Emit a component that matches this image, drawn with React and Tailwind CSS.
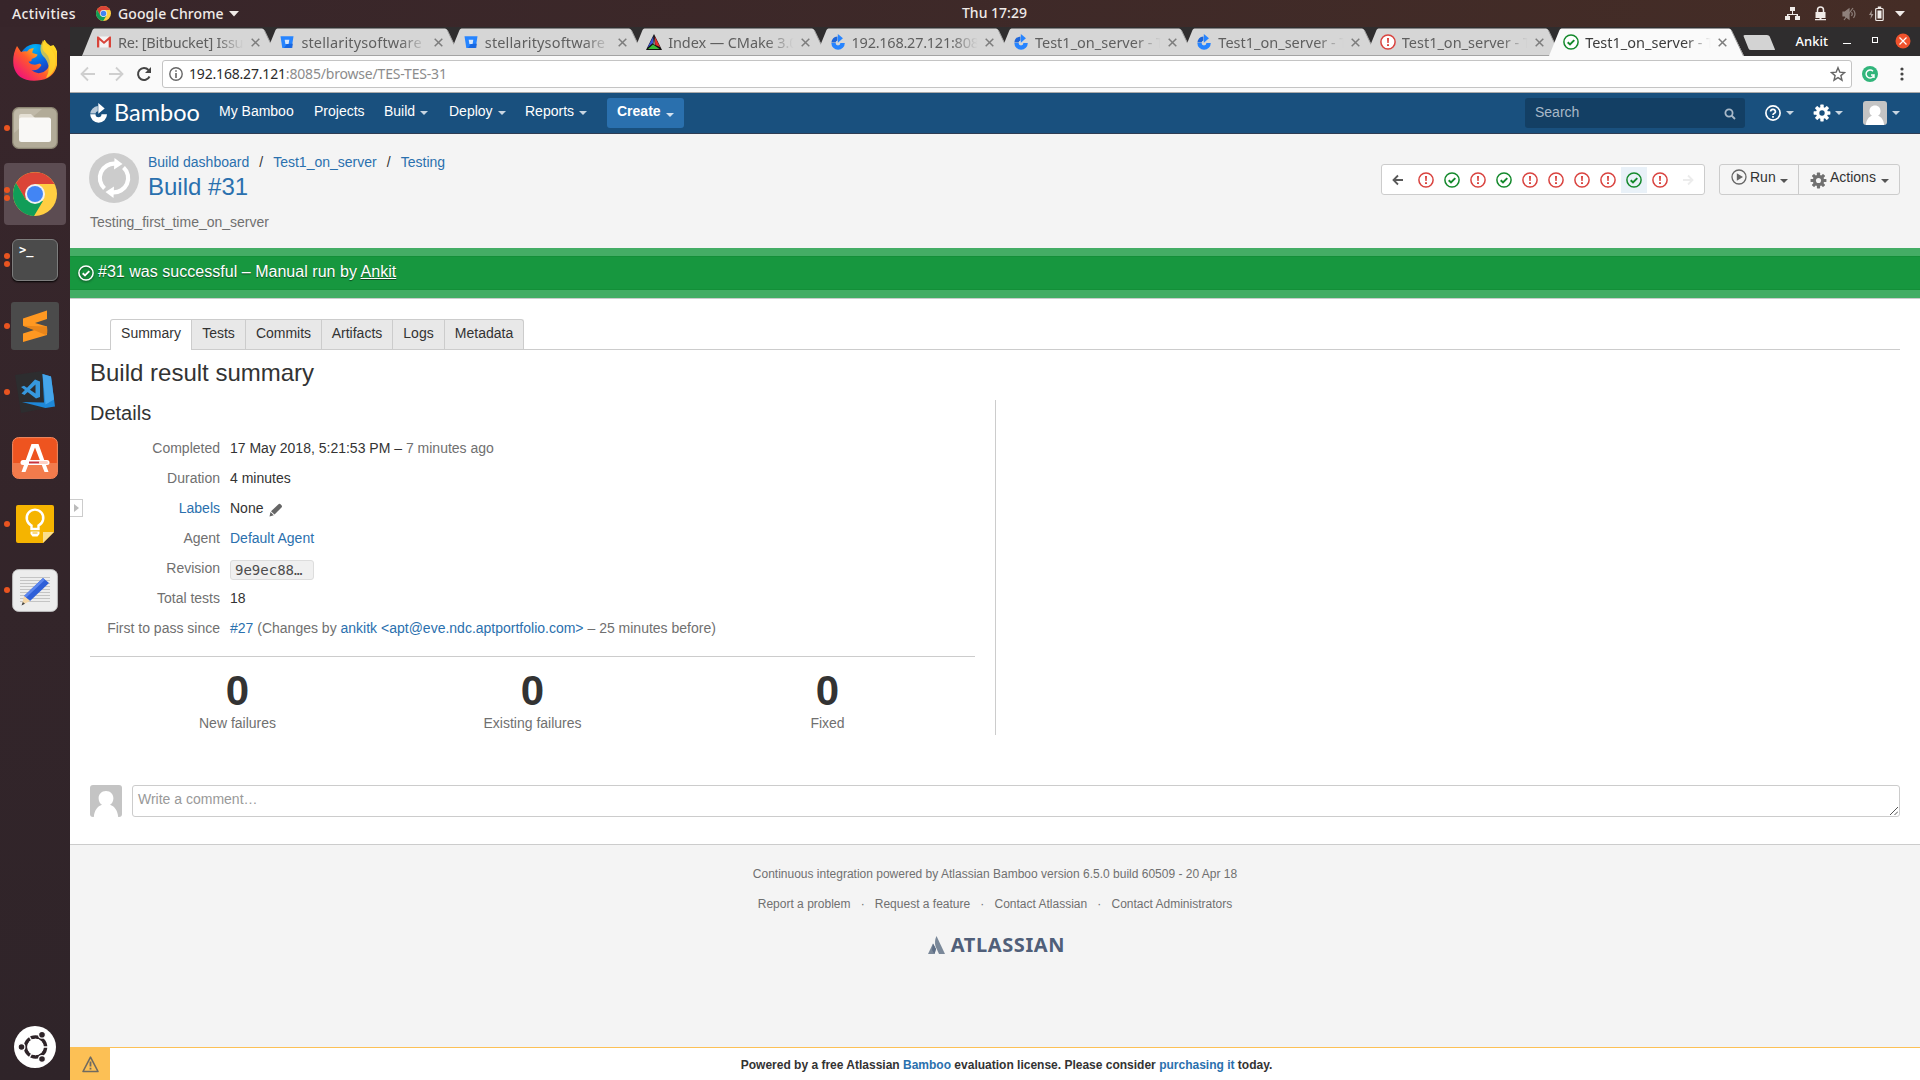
import React from "react";

const UI = "font-['Noto_Sans',sans-serif]";

function Caret({ className = "" }) {
  return (
    <svg width="8" height="4" viewBox="0 0 8 4" className={"shrink-0 " + className} fill="currentColor">
      <path d="M0 0h8L4 4z" />
    </svg>
  );
}

function FailIcon({ size = 16 }) {
  return (
    <svg width={size} height={size} viewBox="0 0 16 16" className="shrink-0">
      <circle cx="8" cy="8" r="7.1" fill="#fff" stroke="#d9433f" strokeWidth="1.5" />
      <path d="M7 4h2l-.3 5H7.3zM7 10.2h2v1.800H7z" fill="#d9433f" />
    </svg>
  );
}

function OkIcon({ size = 16, color = "#14892c", fill = "#fff", className = "" }) {
  return (
    <svg width={size} height={size} viewBox="0 0 16 16" className={"shrink-0 " + className}>
      <circle cx="8" cy="8" r="7.1" fill={fill} stroke={color} strokeWidth="1.5" />
      <path d="M4.700 8.200l2.300 2.200 4.300-4.300" fill="none" stroke={color} strokeWidth="2" />
    </svg>
  );
}

function Gear({ size = 18, className = "", hole = "#fff" }) {
  return (
    <svg width={size} height={size} viewBox="0 0 18 18" className={"shrink-0 " + className} fill="currentColor">
      {[0, 45, 90, 135].map((a) => (
        <rect key={a} x="7.300" y="0.600" width="3.400" height="16.800" rx="0.600" transform={"rotate(" + a + " 9 9)"} />
      ))}
      <circle cx="9" cy="9" r="6" />
      <circle cx="9" cy="9" r="2.700" fill={hole} />
    </svg>
  );
}

function Avatar({ size }) {
  return (
    <svg width={size} height={size} viewBox="0 0 32 32" className="shrink-0 rounded-[3px]">
      <rect width="32" height="32" fill="#c4c4c4" />
      <path d="M16 6c4.600 0 7.400 3.300 7.400 7.300 0 3-1.400 5.300-3.400 6.500 4.500 1.400 7.600 5.700 8.200 12.200H3.800c.6-6.500 3.700-10.800 8.200-12.200-2-1.200-3.400-3.500-3.400-6.500C8.600 9.300 11.400 6 16 6z" fill="#fff" />
    </svg>
  );
}

function BambooMark({ w, h, main, light }) {
  return (
    <svg width={w} height={h} viewBox="0 0 17 20" className="shrink-0">
      <path d="M.2 10.600A8.500 8.500 0 0 1 7.800 3v5.200a2.900 2.900 0 0 0-2.300 2.400z" fill={light} />
      <path d="M8.300 0l6.400 5.400-6.400 5.400z" fill={main} />
      <path d="M.2 11.300h5.300a3 3 0 0 0 6 0H17A8.500 8.500 0 0 1 8.600 19.800 8.500 8.500 0 0 1 .2 11.300z" fill={main} />
    </svg>
  );
}

function ChromeLogo({ size }) {
  return (
    <svg width={size} height={size} viewBox="0 0 44 44" className="shrink-0">
      <circle cx="22" cy="22" r="22" fill="#ffce42" />
      <path d="M22 22L3 11A22 22 0 0 1 41.500 12H22z" fill="#db4437" />
      <path d="M3 11l9.500 16.500L22 12z" fill="#db4437" />
      <path d="M3 11A22 22 0 0 0 21 44l9-15-17-1z" fill="#109d58" />
      <circle cx="22" cy="22" r="10" fill="#f1f1f1" />
      <circle cx="22" cy="22" r="8" fill="#4285f4" />
    </svg>
  );
}

function GmailIcon() {
  return (
    <svg width="16" height="16" viewBox="0 0 16 16">
      <rect x="1" y="2.500" width="14" height="11" fill="#f4f4f4" />
      <path d="M1 13.500v-11h1.500L8 7.500l5.500-5H15v11h-2.300V6L8 10 3.300 6v7.500z" fill="#d8443a" />
    </svg>
  );
}

function BitbucketIcon() {
  return (
    <svg width="16" height="16" viewBox="0 0 16 16">
      <path d="M1.500 2.200h13L12.700 14H3.300z" fill="#2684ff" />
      <path d="M8 9.700h6l-.7 4.300H5z" fill="#0f5bd6" opacity=".7" />
      <path d="M5.700 5.800h4.600L9.600 10H6.400z" fill="#d6e6fb" />
    </svg>
  );
}

function CmakeIcon() {
  return (
    <svg width="16" height="16" viewBox="0 0 16 16">
      <path d="M8 0L16 16H0z" fill="#111" />
      <path d="M7.400 2.300L7 9 1.500 13.500z" fill="#3a52d8" />
      <path d="M8.700 2.300L14.300 13.300 9.300 11z" fill="#e0302f" />
      <path d="M2 14.900l5-4.500 6.500 4.500z" fill="#3bbd3b" />
      <path d="M8 4l.8 7-1.300-1.300z" fill="#d5d5d5" />
    </svg>
  );
}

const bamboo = <BambooMark w={14} h={16} main="#2684ff" light="#1f66d8" />;
const browserTabs = [
  { t: "Re: [Bitbucket] Issu", i: <GmailIcon />, s: "tracking-[-0.25px]" },
  { t: "stellaritysoftware", i: <BitbucketIcon />, s: "tracking-[0.15px]" },
  { t: "stellaritysoftware", i: <BitbucketIcon />, s: "tracking-[0.15px]" },
  { t: "Index — CMake 3.0", i: <CmakeIcon />, s: "tracking-[-0.1px]" },
  { t: "192.168.27.121:808", i: bamboo, s: "tracking-[-0.25px]" },
  { t: "Test1_on_server - T", i: bamboo, s: "tracking-[0px]" },
  { t: "Test1_on_server - T", i: bamboo, s: "tracking-[0px]" },
  { t: "Test1_on_server - T", i: <FailIcon />, s: "tracking-[0px]" },
  { t: "Test1_on_server - T", i: <OkIcon />, s: "tracking-[0px]", active: true },
];

function BrowserTab({ tab }) {
  const fill = tab.active ? "#fafafa" : "#d6d6d6";
  return (
    <div className="relative -mr-[12px] flex h-7 w-[195.400px] shrink-0 items-center pl-[14px]">
      <svg className="absolute inset-0" width="196" height="28" viewBox="0 0 196 28">
        <path d="M0 28L10.500 2Q11.300 .5 12.500 .5H180Q181.500 .5 182.300 2L195 28z" fill={fill} />
        <path d="M182.300 2L194.500 28" stroke="#9b9b9b" fill="none" />
        {!tab.active && <path d="M0 27.500H196" stroke="#a3a3a3" />}
      </svg>
      <div className="relative flex w-4 justify-center">{tab.i}</div>
      <div className={"relative ml-[6px] w-[127px] overflow-hidden text-[14.500px] leading-7 whitespace-nowrap [mask-image:linear-gradient(to_right,#000_78%,transparent_99%)] " + tab.s + (tab.active ? " text-[#3c3c3c]" : " text-[#5f5f5f]")}>
        {tab.t}
      </div>
      <svg className="relative ml-[6px]" width="9" height="9" viewBox="0 0 9 9" stroke="#7d7d7d" strokeWidth="1.500">
        <path d="M.7.7l7.600 7.600M8.300.7L.7 8.300" />
      </svg>
    </div>
  );
}

function TopBar() {
  return (
    <div className={"flex h-[27px] shrink-0 items-center bg-linear-to-r from-[#37252a] to-[#452d26] text-[#f0ebe8] " + UI}>
      <div className="w-[96px] pl-3 text-[14px] font-medium tracking-[0.350px]">Activities</div>
      <ChromeLogo size={15} />
      <div className="ml-[7px] w-[107px] text-[14px] font-medium tracking-[0.080px] whitespace-nowrap">Google Chrome</div>
      <svg width="10" height="6" className="ml-[4px]" fill="#f0ebe8"><path d="M0 0h10L5 5.500z" /></svg>
      <div className="ml-[723px] w-[70px] text-[14px] font-medium whitespace-nowrap">
        <span className="relative -top-px">Thu 17:29</span>
      </div>
      <div className="ml-auto flex items-center pr-[15px]">
        <svg width="15" height="14" fill="#f0ebe8" className="mr-[15px]">
          <path d="M5 0h5v4H8v3h5v2h2v4h-5V9h1.500V8h-8v1H5v4H0V9h2V7h5V4H5z" />
        </svg>
        <svg width="11" height="15" className="mr-[16px]">
          <path d="M2.500 6V4a3 3 0 0 1 6 0v2" stroke="#f0ebe8" strokeWidth="1.500" fill="none" />
          <path d="M.5 6h10v6h-4v1H11v1.200H0V13h4.500v-1h-4z" fill="#f0ebe8" />
        </svg>
        <svg width="15" height="14" className="mr-[12px]" fill="none" stroke="#8f817c" strokeWidth="1.200">
          <path d="M1 5h2l4-3v10L3 9H1z" fill="#8f817c" />
          <path d="M2 13L11 1M9.500 5q1.500 2 0 4M11.500 3q3 4 0 8" />
        </svg>
        <svg width="15" height="16" className="mr-[11px]">
          <path d="M3 4L0 9h2l-.5 4L4.500 8h-2z" fill="#a3958f" />
          <rect x="6.700" y="2.500" width="7.500" height="12" rx="1" fill="none" stroke="#f0ebe8" strokeWidth="1.200" />
          <path d="M8.500 4.500h4v8h-4zM8.800.5h3.400V2H8.800z" fill="#f0ebe8" />
        </svg>
        <svg width="10" height="6" fill="#f0ebe8"><path d="M0 0h10L5 5.500z" /></svg>
      </div>
    </div>
  );
}

function Firefox() {
  return (
    <svg width="44" height="44" viewBox="0 0 44 44">
      <defs>
        <linearGradient id="ff1" x1="0.900" y1="0.100" x2="0.100" y2="0.900">
          <stop offset="0" stopColor="#ffe226" />
          <stop offset=".35" stopColor="#ffb01f" />
          <stop offset=".6" stopColor="#ff5a2b" />
          <stop offset="1" stopColor="#f0107c" />
        </linearGradient>
        <radialGradient id="ff2" cx=".45" cy=".1" r="1">
          <stop offset="0" stopColor="#00b3f4" />
          <stop offset=".5" stopColor="#0a5fe0" />
          <stop offset="1" stopColor="#3b1b8e" />
        </radialGradient>
      </defs>
      <circle cx="23" cy="21" r="17" fill="url(#ff2)" />
      <path d="M4 6l4 6q3-1 6-.5 3-4 7-3-2 2-1.500 4.500l5 1.500q0 2.500-6 4.500 1 3-3 2.500 1 2.500 5 3 3 .5 6-1 3 1 1 3-4 5-9 3.500 5 5 12 2 7-4 6-12-.5-4-4-7-6-4-1-14 1 4 6 7l3-1q6 7 4 18-3 17-20 17.500Q4 42 .6 26-1 15 4 6z" fill="url(#ff1)" />
      <path d="M30 0q1 4 6 7 9 9 6 20-3 9-9 11 6-10-1-20-8-7-2-18z" fill="#ffd92e" opacity=".75" />
    </svg>
  );
}

function LauncherIcon({ name }) {
  switch (name) {
    case "firefox":
      return <Firefox />;
    case "files":
      return (
        <svg width="46" height="42" viewBox="0 0 46 42">
          <rect x=".7" y=".7" width="44.600" height="40.600" rx="6" fill="#b2ab98" stroke="#8d8674" strokeWidth="1.200" />
          <path d="M2 26L30 2H8Q2 2 2 8z" fill="#c0b9a8" />
          <path d="M7 9q0-2 2-2h10l4 4h-2v8H7z" fill="#e4dfd4" />
          <rect x="7" y="10.500" width="32" height="24.500" rx="2.500" fill="#f9f8f6" />
        </svg>
      );
    case "chrome":
      return <ChromeLogo size={44} />;
    case "terminal":
      return (
        <div className="flex h-[42px] w-[46px] rounded-[6px] border border-[#7d7d7d] bg-[#4b4b4b] pt-[3px] pl-[6px] font-['DejaVu_Sans_Mono',monospace] text-[12px] leading-[15px] font-bold text-white shadow-[0_1px_2px_#000]">
          &gt;_
        </div>
      );
    case "sublime":
      return (
        <svg width="48" height="48" viewBox="0 0 48 48">
          <rect width="48" height="48" rx="3" fill="#4b4b4b" />
          <path d="M12 16.500L36 8.500v8.500l-12 4 12 3.500v8.500L12 40v-8.500l12-3.700-12-4z" fill="#ff9821" />
          <path d="M12 23.800l24 .700q1 8-1 8.500z" fill="#e8851a" />
        </svg>
      );
    case "vscode":
      return (
        <svg width="44" height="44" viewBox="0 0 44 44" className="relative left-[2px]">
          <path d="M0 5L27 1l10 36L6 43z" fill="#2d2d2f" />
          <path d="M27.500 4L36 6.500l4 30L30.500 38 7 32l22 .5z" fill="#1e88d8" />
          <path d="M27.500 4L36 6.500l3 23-8.500 5z" fill="#45a5ea" />
          <path d="M20 9.500l5 2v15.500l-4 1.500L6 17l3-1.300 11.500 7.800V14.500L9.500 25l-3-1.500z" fill="#3698de" />
        </svg>
      );
    case "software":
      return (
        <svg width="46" height="42" viewBox="0 0 46 42">
          <rect x=".6" y=".6" width="44.800" height="40.800" rx="6" fill="#ee5420" stroke="#f58b62" />
          <path d="M1 26h44v9q0 6-6 6H7q-6 0-6-6z" fill="#f27b4c" />
          <path d="M19.500 7h7l10 28h-4L23 10.500 13.500 35h-4z" fill="#fff" />
          <rect x="8.500" y="23" width="29" height="5" rx="2.500" fill="#fff" />
          <path d="M17 25.500h10" stroke="#c9343f" strokeWidth="2" />
          <path d="M27 24h7.500a1.500 1.500 0 0 1 0 3H27z" fill="#ffd0c4" />
        </svg>
      );
    case "keep":
      return (
        <svg width="38" height="38" viewBox="0 0 38 38">
          <path d="M2 0h34q2 0 2 2v25L27 38H2q-2 0-2-2V2Q0 0 2 0z" fill="#f5b400" />
          <path d="M27 38V27h11z" fill="#fadf8e" />
          <path d="M15.500 24v-3.500a8.300 8.300 0 1 1 7 0V24z" fill="none" stroke="#fff" strokeWidth="2.400" />
          <path d="M14.500 26.500h9v2.500l-2 2.500h-5l-2-2.500z" fill="#fff" />
          <path d="M16.500 28h5" stroke="#f5b400" />
        </svg>
      );
    default:
      return (
        <svg width="46" height="43" viewBox="0 0 46 43">
          <rect x=".6" y=".6" width="44.800" height="41.800" rx="6" fill="#ededed" stroke="#bcbcbc" />
          <path d="M8 8.500h30M8 11.500h30M8 14.500h30M8 17.500h30M8 20.500h30M8 23.500h30M8 26.500h30M8 29.500h30M8 32.500h30" stroke="#c4c4c4" />
          <path d="M31 9l6 5-19 18-6-5z" fill="#2f5fd8" />
          <path d="M31 9l2 1.700-19 18-2-1.700z" fill="#5c86ee" />
          <path d="M12 27l6 5-8 4z" fill="#f5d7a8" />
          <path d="M10.800 33l2.200 1.800-3.500 1.700z" fill="#444" />
        </svg>
      );
  }
}

const apps = [
  ["firefox", 0], ["files", 1], ["chrome", 2], ["terminal", 2], ["sublime", 1],
  ["vscode", 1], ["software", 0], ["keep", 1], ["editor", 1],
];

function Launcher() {
  return (
    <div className="flex w-[70px] shrink-0 flex-col bg-linear-to-b from-[#38262b] to-[#2f2429] pt-[2px]">
      {apps.map(([name, dots]) => (
        <div key={name} className="relative flex h-[66px] items-center justify-center">
          {name === "chrome" && <div className="absolute inset-x-1 inset-y-[2px] rounded-[4px] bg-[#5c4c52]" />}
          <div className="absolute left-[4px] flex flex-col gap-[2.500px]">
            {dots > 0 && <div className="size-[6px] rounded-full bg-[#e95420]" />}
            {dots > 1 && <div className="size-[6px] rounded-full bg-[#e95420]" />}
          </div>
          <div className="relative"><LauncherIcon name={name} /></div>
        </div>
      ))}
      <svg width="42" height="42" viewBox="0 0 42 42" className="mt-auto mb-[12px] ml-[14px]">
        <circle cx="21" cy="21" r="21" fill="#fff" />
        <circle cx="21.500" cy="21" r="10" fill="none" stroke="#2f2429" strokeWidth="3.600" />
        <g stroke="#fff" strokeWidth="1.400">
          <path d="M21.500 21h14M21.500 21l-7-12M21.500 21l-7 12" />
        </g>
        <g fill="#2f2429" stroke="#fff" strokeWidth="1.200">
          <circle cx="7.500" cy="21" r="3.400" />
          <circle cx="28" cy="8.700" r="3.400" />
          <circle cx="28" cy="33" r="3.400" />
        </g>
        <circle cx="21.500" cy="21" r="8.200" fill="#fff" />
      </svg>
    </div>
  );
}

function TabStrip() {
  return (
    <div className={"flex h-[29px] shrink-0 bg-[#2f2d2e] pt-px pl-[12px] " + UI}>
      {browserTabs.map((t, i) => <BrowserTab key={i} tab={t} />)}
      <svg width="33" height="28" className="ml-[10px] shrink-0">
        <path d="M2 7h22q2 0 2.700 1.500l5.300 13q0 .5-1 .5H8q-2 0-2.500-1.500L.5 8Q.5 7 2 7z" fill="#d3d3d3" />
      </svg>
      <div className="ml-[20px] w-[34px] text-[13px] leading-[26px] font-medium text-white">Ankit</div>
      <div className="mt-[15px] ml-[13px] h-px w-[8px] bg-white" />
      <div className="mt-[9px] ml-[21px] size-[6px] border border-white" />
      <svg width="16" height="16" viewBox="0 0 16 16" className="mt-[5px] ml-[17px]">
        <circle cx="8" cy="8" r="7.500" fill="#f0522c" />
        <path d="M4.500 4.500l7 7M11.500 4.500l-7 7" stroke="#fff" strokeWidth="1.200" />
      </svg>
    </div>
  );
}

function UrlBar() {
  return (
    <div className={"flex h-[37px] shrink-0 items-center border-b border-[#aaa] bg-[#fafafa] " + UI}>
      <svg width="16" height="16" className="ml-[10px]" fill="none" stroke="#cfcfcf" strokeWidth="1.800">
        <path d="M15 8H2M8 1.500L1.500 8 8 14.500" />
      </svg>
      <svg width="16" height="16" className="ml-[12px]" fill="none" stroke="#cfcfcf" strokeWidth="1.800">
        <path d="M1 8h13M8 1.500L14.500 8 8 14.500" />
      </svg>
      <svg width="16" height="16" className="ml-[12px]" fill="none" stroke="#444" strokeWidth="2">
        <path d="M13.500 10.500A6 6 0 1 1 12.500 4" />
        <path d="M15 1v6H9z" fill="#444" stroke="none" />
      </svg>
      <div className="ml-[10px] flex h-7 w-[1690px] items-center rounded-[3px] border border-[#c4c4c4] bg-white pl-[6px]">
        <svg width="14" height="14" viewBox="0 0 14 14">
          <circle cx="7" cy="7" r="6.200" fill="none" stroke="#666" strokeWidth="1.400" />
          <path d="M6.200 3.200h1.600v1.600H6.200zM6.200 6h1.600v5H6.200z" fill="#666" />
        </svg>
        <div className="mb-[2px] ml-[6px] w-[300px] text-[14px] tracking-[-0.180px] whitespace-nowrap text-[#8c8c8c]">
          <span className="text-[#2b2b2b]">192.168.27.121</span>:8085/browse/TES-TES-31
        </div>
        <svg width="16" height="16" viewBox="0 0 16 16" className="mr-[5px] ml-auto" fill="none" stroke="#666" strokeWidth="1.400">
          <path d="M8 1.700l1.800 4.400 4.700.4-3.600 3.100 1.100 4.600L8 11.700l-4 2.500 1.100-4.600L1.500 6.500l4.700-.4z" />
        </svg>
      </div>
      <div className="ml-[10px] flex size-4 items-center justify-center rounded-full bg-[#31b57b]">
        <svg width="10" height="10" fill="none" stroke="#fff" strokeWidth="1.400"><path d="M8 2.200A4 4 0 1 0 9 6H6M9 6v3" /></svg>
      </div>
      <svg width="4" height="14" className="ml-[22px]" fill="#444">
        <circle cx="2" cy="2" r="1.600" /><circle cx="2" cy="7" r="1.600" /><circle cx="2" cy="12" r="1.600" />
      </svg>
    </div>
  );
}

function NavItem({ label, w, menu }) {
  return (
    <div className={"flex h-5 shrink-0 items-center " + w}>
      <span>{label}</span>
      {menu && <Caret className="relative top-[2px] ml-[5px] text-[#c8d5e1]" />}
    </div>
  );
}

function BambooHeader() {
  return (
    <div className="flex h-[41px] shrink-0 border-b border-[#2e3d54] bg-[#19507e] text-[14px] text-white">
      <div className="flex w-[149px] items-start pl-[20px]">
        <div className="mt-[10px]"><BambooMark w={17} h={20} main="#fff" light="#b9c9d8" /></div>
        <div className="mt-[4px] ml-[7px] font-['Lato',sans-serif] text-[23.500px] leading-[30px]">Bamboo</div>
      </div>
      <div className="flex pt-[8px]">
        <NavItem label="My Bamboo" w="w-[95px]" />
        <NavItem label="Projects" w="w-[70px]" />
        <NavItem label="Build" w="w-[65px]" menu />
        <NavItem label="Deploy" w="w-[76px]" menu />
        <NavItem label="Reports" w="w-[82px]" menu />
      </div>
      <div className="mt-[5px] flex h-[30px] w-[77px] items-start rounded-[3px] bg-[#2a70ae] pl-[10px] font-bold">
        <span className="mt-[3px] leading-5">Create</span>
        <Caret className="mt-[15px] ml-[5px] text-[#d4e2ef]" />
      </div>
      <div className="ml-auto flex items-start">
        <div className="mt-[5px] flex h-[30px] w-[220px] items-center rounded-[3px] bg-[#133f64] pr-[9px] pl-[10px] text-[#a9b9c8]">
          <span className="relative -top-[1px]">Search</span>
          <svg width="12" height="12" className="mt-[1px] ml-auto" fill="none" stroke="#a9b9c8" strokeWidth="1.800">
            <circle cx="5" cy="5" r="3.600" /><path d="M7.500 7.500L11 11" />
          </svg>
        </div>
        <div className="mt-[5px] ml-[20px] flex h-[30px] items-center">
          <svg width="16" height="16" viewBox="0 0 16 16" fill="none" stroke="#fff" strokeWidth="1.700">
            <circle cx="8" cy="8" r="7.100" />
            <path d="M5.600 6.500a2.400 2.200 0 1 1 3.400 2q-1 .5-1 1.500M8 11v1.700" />
          </svg>
          <Caret className="ml-[5px] text-[#c8d5e1]" />
          <Gear size={18} className="ml-[19px] text-white" hole="#19507e" />
          <Caret className="ml-[4px] text-[#c8d5e1]" />
          <div className="ml-[20px]"><Avatar size={24} /></div>
          <Caret className="mr-[20px] ml-[5px] text-[#c8d5e1]" />
        </div>
      </div>
    </div>
  );
}

const results = [0, 1, 0, 1, 0, 0, 0, 0, 1, 0];

function PageHeader() {
  return (
    <div className="flex h-[114px] shrink-0 justify-between bg-[#f4f4f4] pr-[20px] pl-[20px] text-[14px]">
      <div className="pt-[19px]">
        <div className="flex">
          <svg width="50" height="50" viewBox="0 0 50 50" className="-ml-px shrink-0">
            <circle cx="25" cy="25" r="25" fill="#ccc" />
            <g fill="none" stroke="#fff" strokeWidth="4.200">
              <path d="M15.500 35.500A14.300 14.300 0 0 1 26.500 10.700" />
              <path d="M34.500 14.500A14.300 14.300 0 0 1 23.500 39.300" />
            </g>
            <path d="M25.500 5l8 6-8.500 5.500zM24.500 45l-8-6 8.500-5.500z" fill="#fff" />
          </svg>
          <div className="ml-[9px]">
            <div className="-mt-[1px] flex leading-5 text-[#2a70ae]">
              <span>Build dashboard</span>
              <span className="w-6 text-center text-[#333]">/</span>
              <span>Test1_on_server</span>
              <span className="w-6 text-center text-[#333]">/</span>
              <span>Testing</span>
            </div>
            <div className="text-[24px] leading-[30px] text-[#2a70ae]">Build #31</div>
          </div>
        </div>
        <div className="mt-[9px] leading-5 text-[#707070]">Testing_first_time_on_server</div>
      </div>
      <div className="flex items-start gap-[14px] pt-[30px] text-[#333]">
        <div className="flex h-[31px] w-[324px] items-center rounded-[3px] border border-[#ccc] bg-white pl-[10px]">
          <svg width="12" height="12" fill="none" stroke="#5a5a5a" strokeWidth="1.800"><path d="M11 6H2M6 1.500L1.500 6 6 10.500" /></svg>
          <div className="ml-[9px] flex">
            {results.map((r, i) => (
              <div key={i} className={"flex h-[26px] w-[26.030px] items-center justify-center " + (i === 8 ? "bg-[#e9f1f8]" : "")}>
                {r ? <OkIcon fill="none" /> : <FailIcon />}
              </div>
            ))}
          </div>
          <svg width="12" height="12" className="ml-[9px]" fill="none" stroke="#ececec" strokeWidth="1.800"><path d="M1 6h9M6 1.500L10.500 6 6 10.500" /></svg>
        </div>
        <div className="flex h-[31px] w-[181px] rounded-[3px] border border-[#ccc] bg-[#f5f5f5]">
          <div className="flex w-[79px] items-start border-r border-[#ccc] pl-[11px]">
            <svg width="16" height="16" viewBox="0 0 16 16" className="mt-[4px]">
              <circle cx="8" cy="8" r="7" fill="none" stroke="#666" strokeWidth="1.300" />
              <path d="M5.800 4.300L12 8l-6.200 3.700z" fill="#666" />
            </svg>
            <span className="mt-[2px] ml-[3px] leading-5">Run</span>
            <Caret className="mt-[14px] ml-[4px] text-[#555]" />
          </div>
          <div className="flex items-start pl-[11px]">
            <Gear size={17} className="mt-[7px] text-[#707070]" hole="#f5f5f5" />
            <span className="mt-[2px] ml-[3px] leading-5">Actions</span>
            <Caret className="mt-[14px] ml-[5px] text-[#555]" />
          </div>
        </div>
      </div>
    </div>
  );
}

function StatusBanner() {
  return (
    <div className="h-[51px] shrink-0 border-b border-[#ccc] bg-[#44ad65] py-[8px]">
      <div className="flex h-[34px] items-start border-y border-[#138f38] bg-[#17973f] pl-[8px] text-[16px] text-white [text-shadow:0_1px_1px_rgba(0,0,0,0.5)]">
        <OkIcon color="#fff" fill="none" className="mt-[8px] drop-shadow-[0_1px_1px_rgba(0,0,0,0.5)]" />
        <span className="mt-[3px] ml-[4px] leading-6 tracking-[0.030px]">#31 was successful – Manual run by <span className="underline">Ankit</span></span>
      </div>
    </div>
  );
}

const pageTabs = [
  ["Summary", "w-[82px]"], ["Tests", "w-[54px]"], ["Commits", "w-[76px]"],
  ["Artifacts", "w-[71px]"], ["Logs", "w-[52px]"], ["Metadata", "w-[79px]"],
];

function Row({ label, link, children }) {
  return (
    <div className="flex h-[30px] leading-5">
      <div className={"w-[130px] shrink-0 text-right " + (link ? "text-[#2a70ae]" : "text-[#707070]")}>{label}</div>
      <div className="ml-[10px] flex items-start whitespace-pre text-[#333]">{children}</div>
    </div>
  );
}

function Summary() {
  return (
    <div className="h-[545px] shrink-0 bg-white px-[20px] pt-[20px] text-[14px] text-[#333]">
      <div className="flex h-[31px] border-b border-[#ccc] pl-[20px]">
        {pageTabs.map(([t, w], i) => (
          <div
            key={t}
            className={"flex justify-center border-t border-r border-[#ccc] leading-[27px] " + w + " " +
              (i === 0 ? "h-[31px] rounded-tl-[3px] border-l bg-white" : "h-[30px] bg-[#e8e8e8]") +
              (i === 5 ? " rounded-tr-[3px]" : "")}
          >
            {t}
          </div>
        ))}
      </div>
      <div className="mt-[8px] text-[24px] leading-[30px]">Build result summary</div>
      <div className="mt-[12px] flex h-[335px] w-[906px] border-r border-[#ccc]">
        <div className="w-[885px]">
          <div className="text-[20px] leading-[26px]">Details</div>
          <div className="mt-[12px]">
            <Row label="Completed">17 May 2018, 5:21:53 PM – <span className="text-[#707070]">7 minutes ago</span></Row>
            <Row label="Duration">4 minutes</Row>
            <Row label="Labels" link>
              None
              <svg width="14" height="14" viewBox="0 0 14 14" className="mt-[5px] ml-[6px]" fill="#666">
                <path d="M9.200 1.500q1-1 2-.5l1.500 1.500q.7 1-.2 2L5.500 11.500 2 8.300zM1.500 9L4.800 12.200.5 13.500z" />
              </svg>
            </Row>
            <Row label="Agent"><span className="text-[#2a70ae]">Default Agent</span></Row>
            <Row label="Revision">
              <div className="mt-[2px] h-[20px] w-[84px] rounded-[3px] border border-[#ddd] bg-[#f0f0f0] pl-[4px] font-['DejaVu_Sans_Mono',monospace] text-[14px] leading-[18px] text-[#4d4d4d]">9e9ec88…</div>
            </Row>
            <Row label="Total tests">18</Row>
            <Row label="First to pass since">
              <span className="text-[#2a70ae]">#27</span>
              <span className="text-[#707070]"> (Changes by </span>
              <span className="text-[#2a70ae]">ankitk &lt;apt@eve.ndc.aptportfolio.com&gt;</span>
              <span className="text-[#707070]"> – 25 minutes before)</span>
            </Row>
          </div>
          <div className="mt-[8px] flex border-t border-[#ccc] pt-[10px]">
            {["New failures", "Existing failures", "Fixed"].map((t) => (
              <div key={t} className="w-[295px] text-center">
                <div className="text-[42px] leading-[48px] font-bold">0</div>
                <div className="-mt-[2px] leading-5 text-[#707070]">{t}</div>
              </div>
            ))}
          </div>
        </div>
      </div>
      <div className="mt-[50px] flex">
        <Avatar size={32} />
        <div className="relative ml-[10px] h-8 flex-1 rounded-[3px] border border-[#ccc] pl-[5px] leading-[26px] text-[#999]">
          Write a comment…
          <svg width="8" height="8" className="absolute right-[1px] bottom-[1px]" stroke="#555"><path d="M0 8L8 0M4.500 8L8 4.500" /></svg>
        </div>
      </div>
    </div>
  );
}

function Footer() {
  const links = ["Report a problem", "Request a feature", "Contact Atlassian", "Contact Administrators"];
  return (
    <div className="flex h-[203px] shrink-0 flex-col items-center border-t border-[#ccc] bg-[#f4f4f4] pt-[19px] text-[12px] text-[#707070]">
      <div className="leading-5">Continuous integration powered by Atlassian Bamboo version 6.5.0 build 60509 - 20 Apr 18</div>
      <div className="mt-[10px] flex leading-5">
        {links.map((l, i) => (
          <React.Fragment key={l}>
            {i > 0 && <span className="w-[24.300px] text-center">·</span>}
            <span>{l}</span>
          </React.Fragment>
        ))}
      </div>
      <div className="mt-[20px] ml-[2px] flex items-center">
        <svg width="17" height="18" viewBox="0 0 17 18">
          <path d="M8.500 0L17 18h-6L7.600 10.500Q6 5.500 8.500 0z" fill="#7a8899" />
          <path d="M5 7.500l3 5.500-1.500 5H0z" fill="#7a8899" />
          <path d="M5 7.500l3 5.500-1.500 5L4 14z" fill="#5d6e86" />
        </svg>
        <div className="-mr-px ml-[6px] font-['Noto_Sans',sans-serif] text-[20px] leading-[22px] font-bold tracking-[0.600px] text-[#505f79]">ATLASSIAN</div>
      </div>
    </div>
  );
}

function LicenseBar() {
  return (
    <div className="flex h-[33px] shrink-0 border-t border-[#fcc055] bg-white text-[12px] font-bold text-[#333]">
      <div className="flex w-10 items-center justify-center bg-[#fcc055]">
        <svg width="17" height="17" viewBox="0 0 17 17">
          <path d="M8.500 1.200L16 15.500H1z" fill="none" stroke="#6f6a60" strokeWidth="1.600" strokeLinejoin="round" />
          <path d="M7.600 5.500h1.800v5H7.600zM7.600 11.800h1.800v1.700H7.600z" fill="#6f6a60" />
        </svg>
      </div>
      <div className="flex-1 pr-[17px] text-center leading-[34px]">
        Powered by a free Atlassian <span className="text-[#2a70ae]">Bamboo</span> evaluation license. Please consider <span className="text-[#2a70ae]">purchasing it</span> today.
      </div>
    </div>
  );
}

export default function App() {
  return (
    <div className="flex h-[1080px] w-[1920px] flex-col overflow-hidden font-['Liberation_Sans',Arial,sans-serif]">
      <TopBar />
      <div className="flex min-h-0 flex-1">
        <Launcher />
        <div className="relative flex w-[1850px] flex-col">
          <TabStrip />
          <UrlBar />
          <BambooHeader />
          <PageHeader />
          <StatusBanner />
          <Summary />
          <Footer />
          <LicenseBar />
          <div className="absolute top-[472px] left-0 flex h-[18px] w-[13px] items-center justify-center border border-l-0 border-[#ccc] bg-white">
            <svg width="5" height="8" fill="#bbb"><path d="M0 0l5 4-5 4z" /></svg>
          </div>
        </div>
      </div>
    </div>
  );
}
